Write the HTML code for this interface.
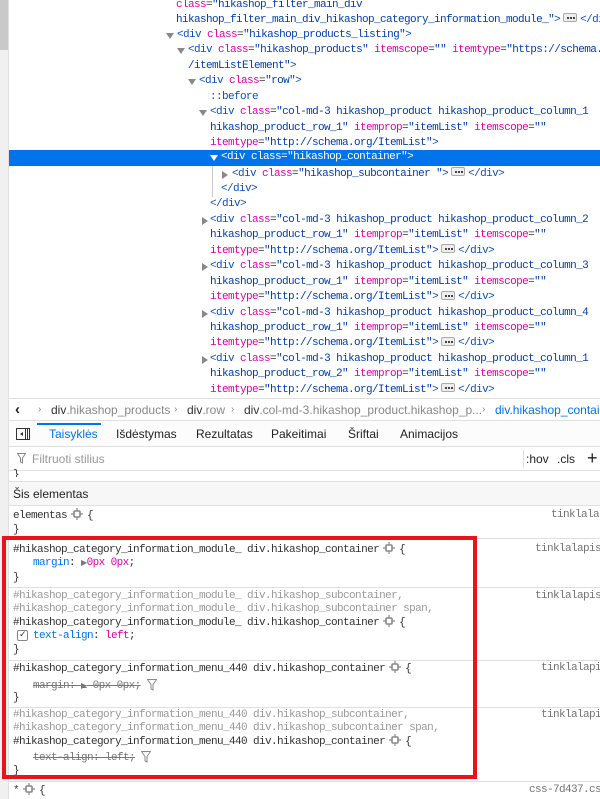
<!DOCTYPE html>
<html><head><meta charset="utf-8">
<style>
*{margin:0;padding:0;box-sizing:border-box}
body{width:600px;height:799px;overflow:hidden;background:#fff;position:relative;font-family:"Liberation Sans",sans-serif}
.mono{font-family:"Liberation Mono",monospace;font-size:11px;letter-spacing:-0.6px}
#gut{position:absolute;left:0;top:0;width:9px;height:799px;background:#f0f0f0;border-right:1px solid #e0e0e0}
#thumb{position:absolute;left:0;top:0;width:8px;height:50px;background:#c9c9c9}
#markup{position:absolute;left:9px;top:0;width:591px;height:398px;overflow:hidden}
.ml{position:absolute;left:0;right:0;height:15.5px;line-height:15.5px;white-space:pre}
.ml span.t{position:absolute;top:0}
.tg{color:#0a50c0}.an{color:#dd00a9}.av{color:#003eaa}.pu{color:#333}
.sel{background:#0074e8}
.sel *{color:#fff!important}
.tri{position:absolute;width:0;height:0}
.down{border-left:4px solid transparent;border-right:4px solid transparent;border-top:6px solid #888;top:5px}
.right{border-top:4px solid transparent;border-bottom:4px solid transparent;border-left:6px solid #888;top:4px}
.sel .down{border-top-color:#fff}
.dots{display:inline-block;width:14px;height:9px;border:1px solid #aaa;border-radius:2px;background:#eee;vertical-align:middle;position:relative;top:-1px;margin:0 3px}
.dots::after{content:"";position:absolute;left:3px;top:3px;width:2px;height:2px;background:#444;box-shadow:3px 0 #444,6px 0 #444}
#bc{position:absolute;left:9px;top:398px;width:591px;height:23px;border-top:1px solid #e0e0e0;border-bottom:1px solid #e0e0e0;font-size:12px;line-height:22px;white-space:nowrap;color:#333}
#bc span{position:absolute;top:0}
.g{color:#888}
#tabs{position:absolute;left:9px;top:421px;width:591px;height:26px;border-bottom:1px solid #e0e0e0;background:#fcfcfc;font-size:12px;line-height:27px;color:#222}
#tabs span{position:absolute;top:0}
#filter{position:absolute;left:9px;top:447px;width:591px;height:24px;border-bottom:1px solid #e0e0e0;font-size:12px;line-height:24px}
#filter span{position:absolute;top:0}
.rl{position:absolute;left:13px;white-space:pre;line-height:13px;color:#333}
.src{position:absolute;white-space:pre;color:#737373;line-height:13px}
.hr{position:absolute;left:9px;right:0;height:1px;background:#e0e0e0}
.pn{color:#0074e8}.pv{color:#dd00a9}.gs{color:#999}
.strike{text-decoration:line-through;color:#777}
.gear{display:inline-block;vertical-align:middle;position:relative;top:-1px;margin:0 4px}
</style></head><body>
<div id="gut"><div id="thumb"></div></div>

<div id="markup" class="mono">
 <div class="ml" style="top:-2.5px"><span class="t" style="left:167px"><span class="an">class</span><span class="pu">=</span><span class="av">"hikashop_filter_main_div</span></span></div>
 <div class="ml" style="top:12.5px"><span class="t" style="left:167px"><span class="av">hikashop_filter_main_div_hikashop_category_information_module_"</span><span class="tg">&gt;</span><span class="dots"></span><span class="tg">&lt;/di</span></span></div>
 <div class="ml" style="top:27.9px"><i class="tri down" style="left:157px"></i><span class="t" style="left:168px"><span class="tg">&lt;div</span> <span class="an">class</span><span class="pu">=</span><span class="av">"hikashop_products_listing"</span><span class="tg">&gt;</span></span></div>
 <div class="ml" style="top:43.4px"><i class="tri down" style="left:168px"></i><span class="t" style="left:179px"><span class="tg">&lt;div</span> <span class="an">class</span><span class="pu">=</span><span class="av">"hikashop_products"</span> <span class="an">itemscope</span><span class="pu">=</span><span class="av">""</span> <span class="an">itemtype</span><span class="pu">=</span><span class="av">"https://schema.org</span></span></div>
 <div class="ml" style="top:58.8px"><span class="t" style="left:179px"><span class="av">/itemListElement"</span><span class="tg">&gt;</span></span></div>
 <div class="ml" style="top:74.3px"><i class="tri down" style="left:179px"></i><span class="t" style="left:190px"><span class="tg">&lt;div</span> <span class="an">class</span><span class="pu">=</span><span class="av">"row"</span><span class="tg">&gt;</span></span></div>
 <div class="ml" style="top:89.7px"><span class="t" style="left:201px"><span class="tg">::before</span></span></div>
 <div class="ml" style="top:105.2px"><i class="tri down" style="left:190px"></i><span class="t" style="left:201px"><span class="tg">&lt;div</span> <span class="an">class</span><span class="pu">=</span><span class="av">"col-md-3 hikashop_product hikashop_product_column_1</span></span></div>
 <div class="ml" style="top:120.6px"><span class="t" style="left:201px"><span class="av">hikashop_product_row_1"</span> <span class="an">itemprop</span><span class="pu">=</span><span class="av">"itemList"</span> <span class="an">itemscope</span><span class="pu">=</span><span class="av">""</span></span></div>
 <div class="ml" style="top:135.6px"><span class="t" style="left:201px"><span class="an">itemtype</span><span class="pu">=</span><span class="av">"http://schema.org/ItemList"</span><span class="tg">&gt;</span></span></div>
 <div class="ml sel" style="top:150px;height:16px"><i class="tri down" style="left:201px"></i><span class="t" style="left:212px"><span class="tg">&lt;div</span> <span class="an">class</span><span class="pu">=</span><span class="av">"hikashop_container"</span><span class="tg">&gt;</span></span></div>
 <div style="position:absolute;left:203px;top:166px;width:1px;height:31px;background:#ccc"></div>
 <div class="ml" style="top:166.5px"><i class="tri right" style="left:213px"></i><span class="t" style="left:223px"><span class="tg">&lt;div</span> <span class="an">class</span><span class="pu">=</span><span class="av">"hikashop_subcontainer "</span><span class="tg">&gt;</span><span class="dots"></span><span class="tg">&lt;/div&gt;</span></span></div>
 <div class="ml" style="top:181.9px"><span class="t" style="left:212px"><span class="tg">&lt;/div&gt;</span></span></div>
 <div class="ml" style="top:197.4px"><span class="t" style="left:201px"><span class="tg">&lt;/div&gt;</span></span></div>

 <div class="ml" style="top:212.8px"><i class="tri right" style="left:193px"></i><span class="t" style="left:201px"><span class="tg">&lt;div</span> <span class="an">class</span><span class="pu">=</span><span class="av">"col-md-3 hikashop_product hikashop_product_column_2</span></span></div>
 <div class="ml" style="top:228.3px"><span class="t" style="left:201px"><span class="av">hikashop_product_row_1"</span> <span class="an">itemprop</span><span class="pu">=</span><span class="av">"itemList"</span> <span class="an">itemscope</span><span class="pu">=</span><span class="av">""</span></span></div>
 <div class="ml" style="top:243.7px"><span class="t" style="left:201px"><span class="an">itemtype</span><span class="pu">=</span><span class="av">"http://schema.org/ItemList"</span><span class="tg">&gt;</span><span class="dots"></span><span class="tg">&lt;/div&gt;</span></span></div>
 <div class="ml" style="top:259.2px"><i class="tri right" style="left:193px"></i><span class="t" style="left:201px"><span class="tg">&lt;div</span> <span class="an">class</span><span class="pu">=</span><span class="av">"col-md-3 hikashop_product hikashop_product_column_3</span></span></div>
 <div class="ml" style="top:274.6px"><span class="t" style="left:201px"><span class="av">hikashop_product_row_1"</span> <span class="an">itemprop</span><span class="pu">=</span><span class="av">"itemList"</span> <span class="an">itemscope</span><span class="pu">=</span><span class="av">""</span></span></div>
 <div class="ml" style="top:290.1px"><span class="t" style="left:201px"><span class="an">itemtype</span><span class="pu">=</span><span class="av">"http://schema.org/ItemList"</span><span class="tg">&gt;</span><span class="dots"></span><span class="tg">&lt;/div&gt;</span></span></div>
 <div class="ml" style="top:305.5px"><i class="tri right" style="left:193px"></i><span class="t" style="left:201px"><span class="tg">&lt;div</span> <span class="an">class</span><span class="pu">=</span><span class="av">"col-md-3 hikashop_product hikashop_product_column_4</span></span></div>
 <div class="ml" style="top:321px"><span class="t" style="left:201px"><span class="av">hikashop_product_row_1"</span> <span class="an">itemprop</span><span class="pu">=</span><span class="av">"itemList"</span> <span class="an">itemscope</span><span class="pu">=</span><span class="av">""</span></span></div>
 <div class="ml" style="top:336.4px"><span class="t" style="left:201px"><span class="an">itemtype</span><span class="pu">=</span><span class="av">"http://schema.org/ItemList"</span><span class="tg">&gt;</span><span class="dots"></span><span class="tg">&lt;/div&gt;</span></span></div>
 <div class="ml" style="top:351.9px"><i class="tri right" style="left:193px"></i><span class="t" style="left:201px"><span class="tg">&lt;div</span> <span class="an">class</span><span class="pu">=</span><span class="av">"col-md-3 hikashop_product hikashop_product_column_1</span></span></div>
 <div class="ml" style="top:367.3px"><span class="t" style="left:201px"><span class="av">hikashop_product_row_2"</span> <span class="an">itemprop</span><span class="pu">=</span><span class="av">"itemList"</span> <span class="an">itemscope</span><span class="pu">=</span><span class="av">""</span></span></div>
 <div class="ml" style="top:382.8px"><span class="t" style="left:201px"><span class="an">itemtype</span><span class="pu">=</span><span class="av">"http://schema.org/ItemList"</span><span class="tg">&gt;</span><span class="dots"></span><span class="tg">&lt;/div&gt;</span></span></div>
</div>

<div id="bc">
 <span style="left:6px;font-size:15px;font-weight:bold;color:#222">‹</span>
 <span class="g" style="left:29px;font-size:10px">›</span>
 <span style="left:42px">div<span class="g">.hikashop_products</span></span>
 <span class="g" style="left:165px;font-size:10px">›</span>
 <span style="left:178px">div<span class="g">.row</span></span>
 <span class="g" style="left:222px;font-size:10px">›</span>
 <span style="left:235px">div<span class="g">.col-md-3.hikashop_product.hikashop_p...</span></span>
 <span class="g" style="left:473px;font-size:10px">›</span>
 <span style="left:486px;color:#0074e8">div.hikashop_container</span>
</div>

<div id="tabs">
 <div style="position:absolute;left:28px;top:2px;width:64px;height:2px;background:#0074e8"></div>
 <svg style="position:absolute;left:7px;top:7px" width="14" height="12" viewBox="0 0 14 12"><rect x="0.5" y="0.5" width="13" height="11" fill="none" stroke="#333"/><line x1="9.5" y1="1" x2="9.5" y2="11" stroke="#333"/><line x1="11.5" y1="1" x2="11.5" y2="11" stroke="#333"/><path d="M4 6 L7 4 L7 8Z" fill="#333"/></svg>
 <span style="left:40px;color:#0074e8">Taisyklės</span>
 <span style="left:107px">Išdėstymas</span>
 <span style="left:187px">Rezultatas</span>
 <span style="left:262px">Pakeitimai</span>
 <span style="left:339px">Šriftai</span>
 <span style="left:391px">Animacijos</span>
</div>

<div id="filter">
 <svg style="position:absolute;left:8px;top:6px" width="9" height="11" viewBox="0 0 9 11"><path d="M0.5 0.5 H8.5 L5.5 5 V10 L3.5 9 V5 Z" fill="none" stroke="#888"/></svg>
 <span style="left:23px;color:#999">Filtruoti stilius</span>
 <div style="position:absolute;left:514px;top:3px;width:1px;height:18px;background:#ddd"></div>
 <span style="left:517px;color:#222">:hov</span>
 <span style="left:548px;color:#222">.cls</span>
 <span style="left:578px;color:#222;font-size:18px;line-height:22px">+</span>
</div>

<div class="mono">
 <div class="rl" style="top:469px;height:8px;overflow:hidden">}</div>
 <div class="hr" style="top:481px"></div>
 <div style="position:absolute;left:9px;right:0;top:482px;height:24px;background:#f7f7f7;border-bottom:1px solid #e0e0e0;font-family:'Liberation Sans',sans-serif;font-size:12px;letter-spacing:0;line-height:24px;padding-left:4px;color:#222">Šis elementas</div>

 <div class="rl" style="top:509px">elementas<svg class="gear" width="12" height="12" viewBox="0 0 12 12"><rect x="3" y="3" width="6" height="6" rx="1" fill="none" stroke="#888" stroke-width="1.6"/><path d="M6 0V3M6 9V12M0 6H3M9 6H12" stroke="#888" stroke-width="1.2"/></svg>{</div>
 <div class="src" style="left:551px;top:509px">tinklala</div>
 <div class="rl" style="top:524px">}</div>
 <div class="hr" style="top:538px"></div>

 <div class="rl" style="top:543px">#hikashop_category_information_module_ div.hikashop_container<svg class="gear" width="12" height="12" viewBox="0 0 12 12"><rect x="3" y="3" width="6" height="6" rx="1" fill="none" stroke="#888" stroke-width="1.6"/><path d="M6 0V3M6 9V12M0 6H3M9 6H12" stroke="#888" stroke-width="1.2"/></svg>{</div>
 <div class="src" style="left:535px;top:543px">tinklalapis</div>
 <div class="rl" style="left:33px;top:557px"><span class="pn">margin</span>: <span style="color:#777;font-size:8px">▶</span><span class="pv">0px 0px</span>;</div>
 <div class="rl" style="top:572px">}</div>
 <div class="hr" style="top:587px"></div>

 <div class="rl gs" style="top:590px">#hikashop_category_information_module_ div.hikashop_subcontainer,</div>
 <div class="src" style="left:535px;top:590px">tinklalapis</div>
 <div class="rl gs" style="top:603px">#hikashop_category_information_module_ div.hikashop_subcontainer span,</div>
 <div class="rl" style="top:616px">#hikashop_category_information_module_ div.hikashop_container<svg class="gear" width="12" height="12" viewBox="0 0 12 12"><rect x="3" y="3" width="6" height="6" rx="1" fill="none" stroke="#888" stroke-width="1.6"/><path d="M6 0V3M6 9V12M0 6H3M9 6H12" stroke="#888" stroke-width="1.2"/></svg>{</div>
 <div style="position:absolute;left:17px;top:630px;width:11px;height:11px;border:1px solid #888;border-radius:2px;font-size:9px;line-height:9px;text-align:center;color:#333">✓</div>
 <div class="rl" style="left:33px;top:630px"><span class="pn">text-align</span>: <span class="pv">left</span>;</div>
 <div class="rl" style="top:644px">}</div>
 <div class="hr" style="top:660px"></div>

 <div class="rl" style="top:662px">#hikashop_category_information_menu_440 div.hikashop_container<svg class="gear" width="12" height="12" viewBox="0 0 12 12"><rect x="3" y="3" width="6" height="6" rx="1" fill="none" stroke="#888" stroke-width="1.6"/><path d="M6 0V3M6 9V12M0 6H3M9 6H12" stroke="#888" stroke-width="1.2"/></svg>{</div>
 <div class="src" style="left:541px;top:662px">tinklalapi</div>
 <div class="rl" style="left:33px;top:679px"><span class="strike">margin: <span style="font-size:8px">▶</span> 0px 0px;</span> <svg width="10" height="12" viewBox="0 0 10 12" style="vertical-align:middle"><path d="M0.5 0.5 H9.5 L6 5.5 V11 L4 10 V5.5 Z" fill="none" stroke="#888"/></svg></div>
 <div class="rl" style="top:692px">}</div>
 <div class="hr" style="top:707px"></div>

 <div class="rl gs" style="top:709px">#hikashop_category_information_menu_440 div.hikashop_subcontainer,</div>
 <div class="src" style="left:541px;top:709px">tinklalapi</div>
 <div class="rl gs" style="top:722px">#hikashop_category_information_menu_440 div.hikashop_subcontainer span,</div>
 <div class="rl" style="top:735px">#hikashop_category_information_menu_440 div.hikashop_container<svg class="gear" width="12" height="12" viewBox="0 0 12 12"><rect x="3" y="3" width="6" height="6" rx="1" fill="none" stroke="#888" stroke-width="1.6"/><path d="M6 0V3M6 9V12M0 6H3M9 6H12" stroke="#888" stroke-width="1.2"/></svg>{</div>
 <div class="rl" style="left:33px;top:751px"><span class="strike">text-align: left;</span> <svg width="10" height="12" viewBox="0 0 10 12" style="vertical-align:middle"><path d="M0.5 0.5 H9.5 L6 5.5 V11 L4 10 V5.5 Z" fill="none" stroke="#888"/></svg></div>
 <div class="rl" style="top:765px">}</div>
 <div class="hr" style="top:781px"></div>

 <div class="rl" style="top:784px">*<svg class="gear" width="12" height="12" viewBox="0 0 12 12"><rect x="3" y="3" width="6" height="6" rx="1" fill="none" stroke="#888" stroke-width="1.6"/><path d="M6 0V3M6 9V12M0 6H3M9 6H12" stroke="#888" stroke-width="1.2"/></svg>{</div>
 <div class="src" style="left:529px;top:784px">css-7d437.cs</div>
</div>

<div style="position:absolute;left:2px;top:536px;width:475px;height:243px;border:4px solid #e8141c"></div>
</body></html>
